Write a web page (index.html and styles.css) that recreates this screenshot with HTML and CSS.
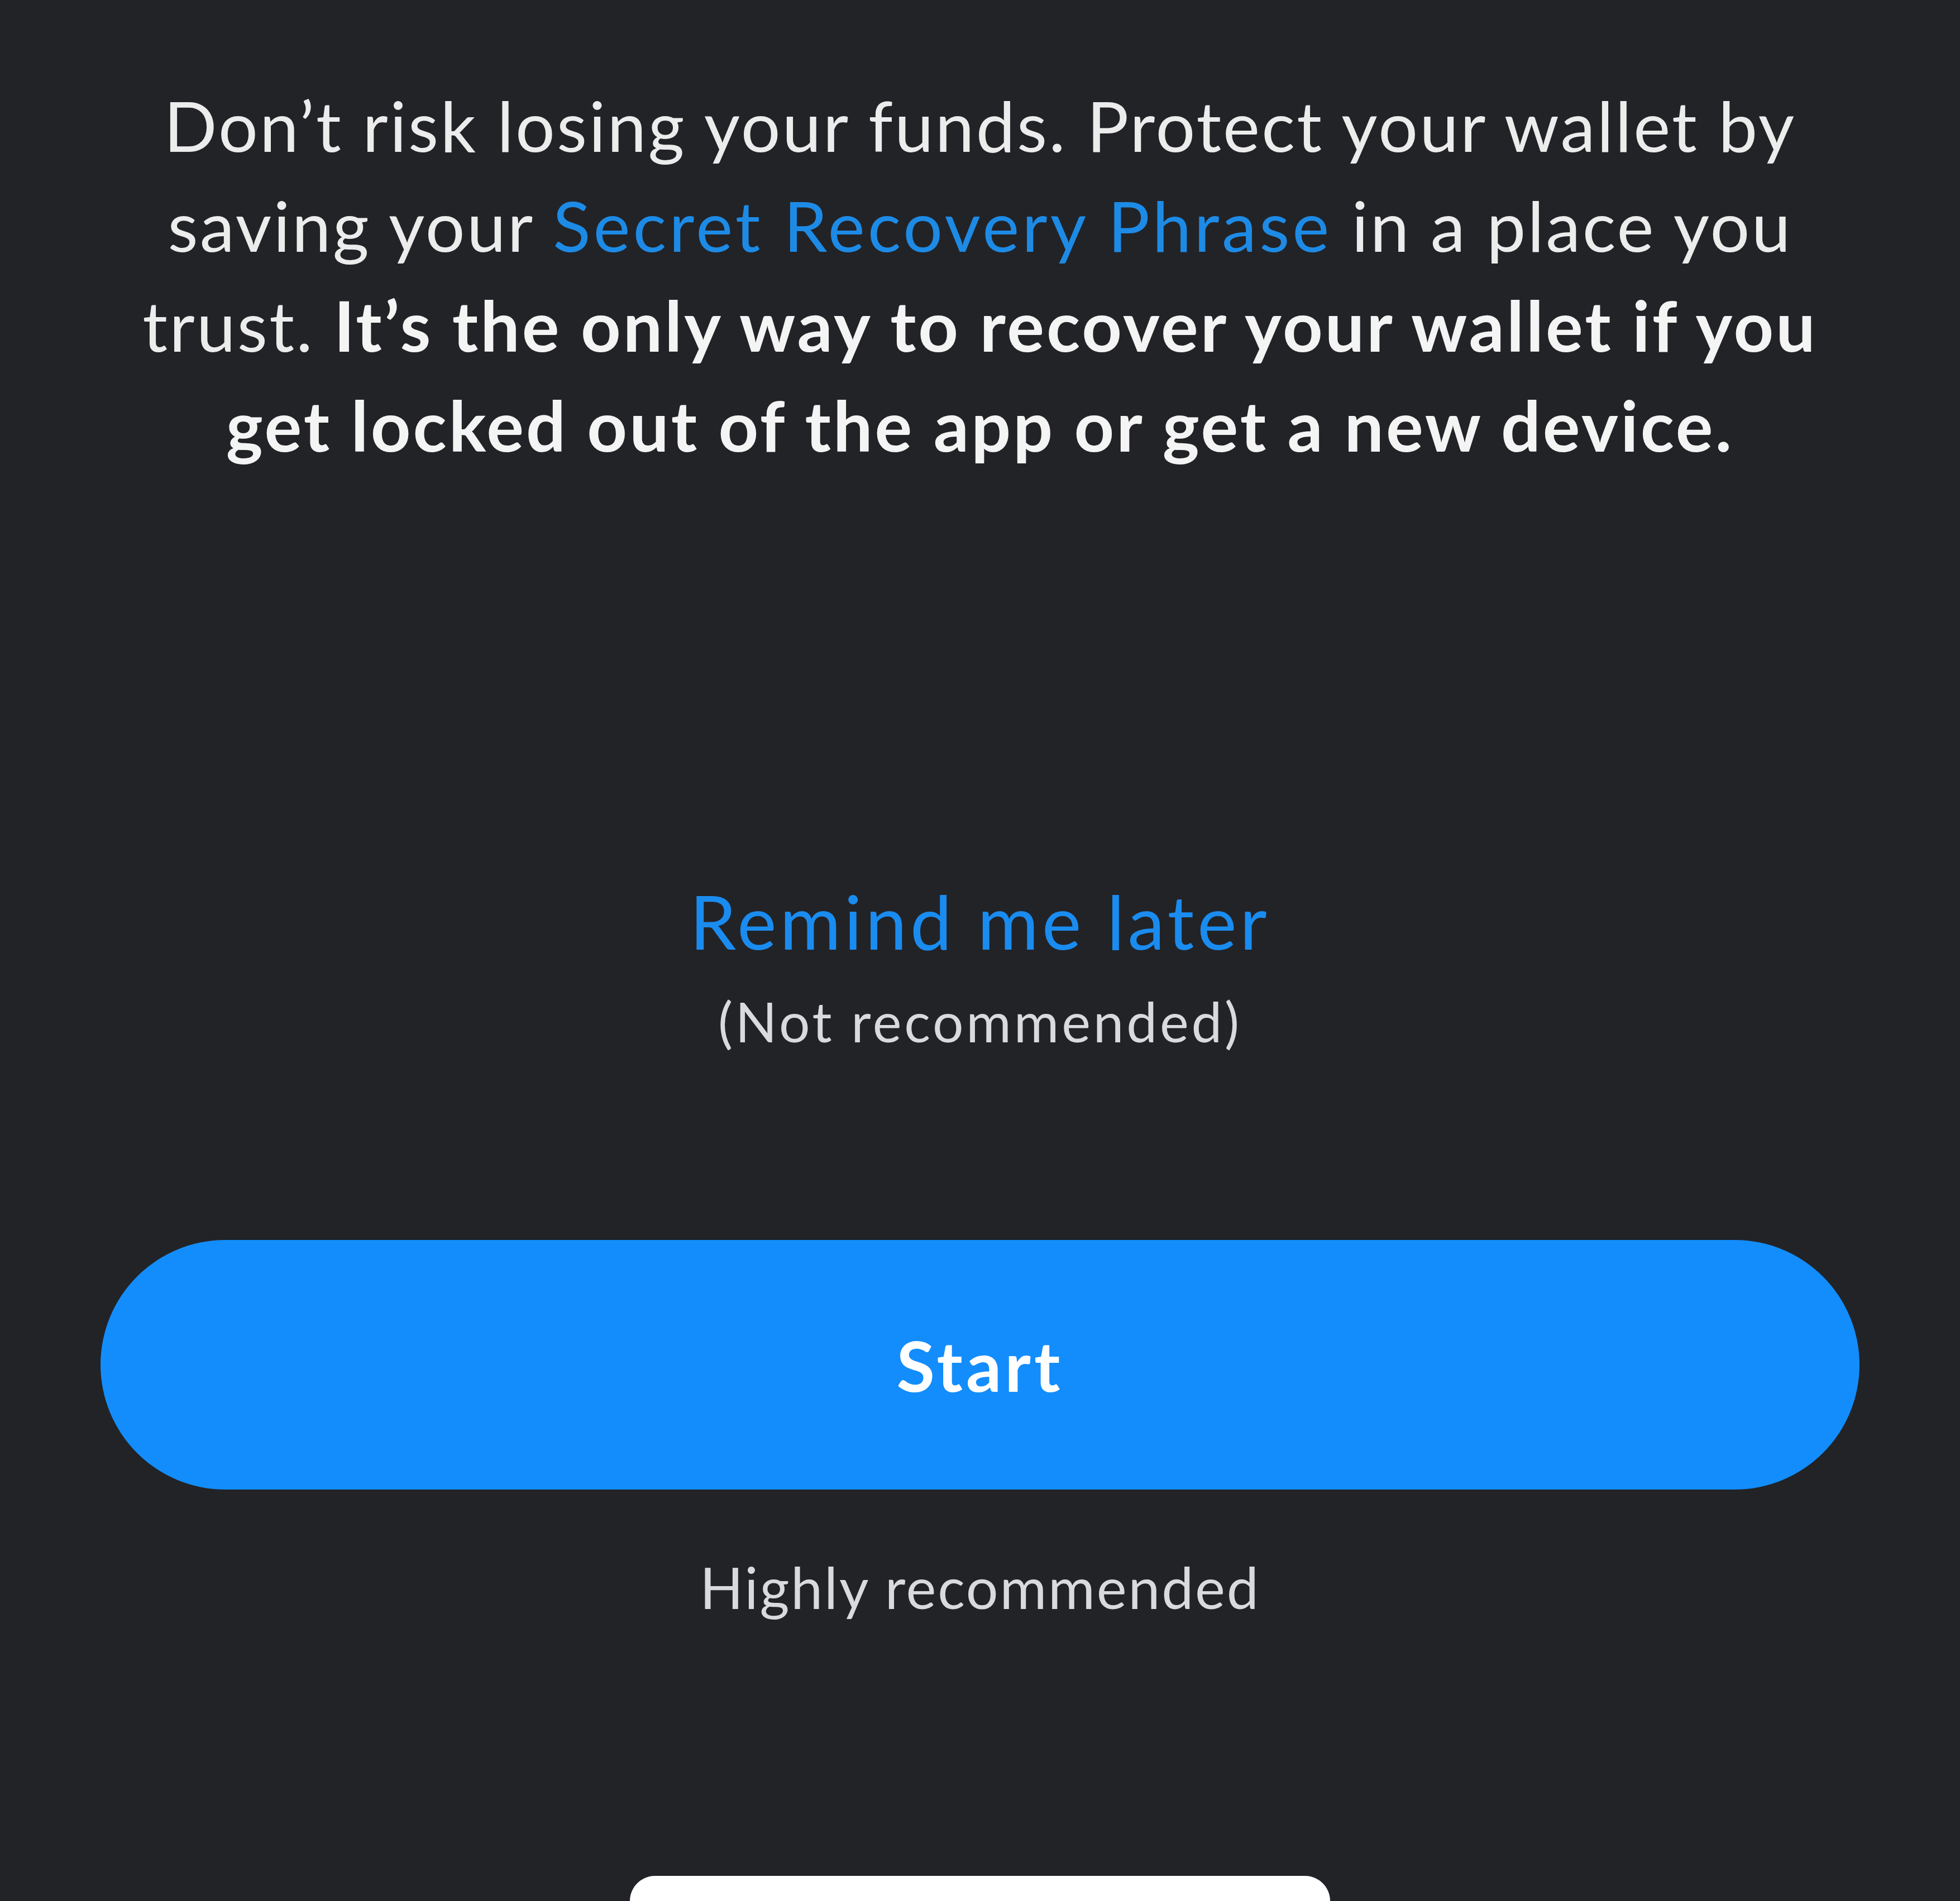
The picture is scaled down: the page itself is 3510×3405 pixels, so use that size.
FILE: index.html
```html
<!DOCTYPE html>
<html lang="en">
<head>
<meta charset="utf-8">
<title>Protect your wallet</title>
<link rel="stylesheet" href="styles.css">
</head>
<body>
<main class="screen">
  <p class="intro">
    Don’t risk losing your funds. Protect your wallet by<br>
    saving your <span class="link">Secret Recovery Phrase</span> in a place you<br>
    trust. <strong>It’s the only way to recover your wallet if you<br>
    get locked out of the app or get a new device.</strong>
  </p>
  <div class="remind">
    <span class="remind-link">Remind me later</span>
    <span class="remind-note">(Not recommended)</span>
  </div>
  <div class="actions">
    <button class="start-btn" type="button">Start</button>
    <span class="start-note">Highly recommended</span>
  </div>
  <div class="home-indicator"></div>
</main>
</body>
</html>
```

FILE: styles.css
```css
html, body {
  margin: 0;
  padding: 0;
  background: #222327;
}

.screen {
  height: 3405px;
  box-sizing: border-box;
  display: flex;
  flex-direction: column;
  align-items: center;
  padding: 135px 180px 0;
  overflow: hidden;
  font-family: "Lato", "Noto Sans", sans-serif;
  color: #ececec;
}

.intro {
  margin: 0;
  text-align: center;
  font-size: 125px;
  line-height: 179px;
  font-weight: 400;
  letter-spacing: 3.2px;
  white-space: nowrap;
}

.intro strong {
  font-weight: 700;
  letter-spacing: 4px;
  color: #f4f4f4;
}

.link {
  color: #1d8be6;
  letter-spacing: 5px;
}

.remind {
  margin-top: 719px;
  display: flex;
  flex-direction: column;
  align-items: center;
  gap: 40px;
}

.remind-link {
  color: #1a8cf0;
  font-size: 133px;
  line-height: 160px;
  letter-spacing: 6px;
}

.remind-note {
  color: #d8dadd;
  font-size: 98px;
  line-height: 118px;
  letter-spacing: 4.8px;
}

.actions {
  margin-top: 333px;
  align-self: stretch;
  display: flex;
  flex-direction: column;
  align-items: center;
  gap: 114px;
}

.start-btn {
  width: 100%;
  height: 447px;
  border: none;
  border-radius: 224px;
  background: #138dfc;
  color: #ffffff;
  font-family: inherit;
  font-size: 125px;
  font-weight: 700;
  letter-spacing: 6px;
  padding: 0;
}

.start-note {
  color: #d8dadd;
  font-size: 102px;
  line-height: 122px;
  letter-spacing: 2.8px;
}

.home-indicator {
  margin-top: auto;
  margin-bottom: -45px;
  width: 1254px;
  height: 90px;
  border-radius: 45px;
  background: #ffffff;
  flex: none;
}
```
